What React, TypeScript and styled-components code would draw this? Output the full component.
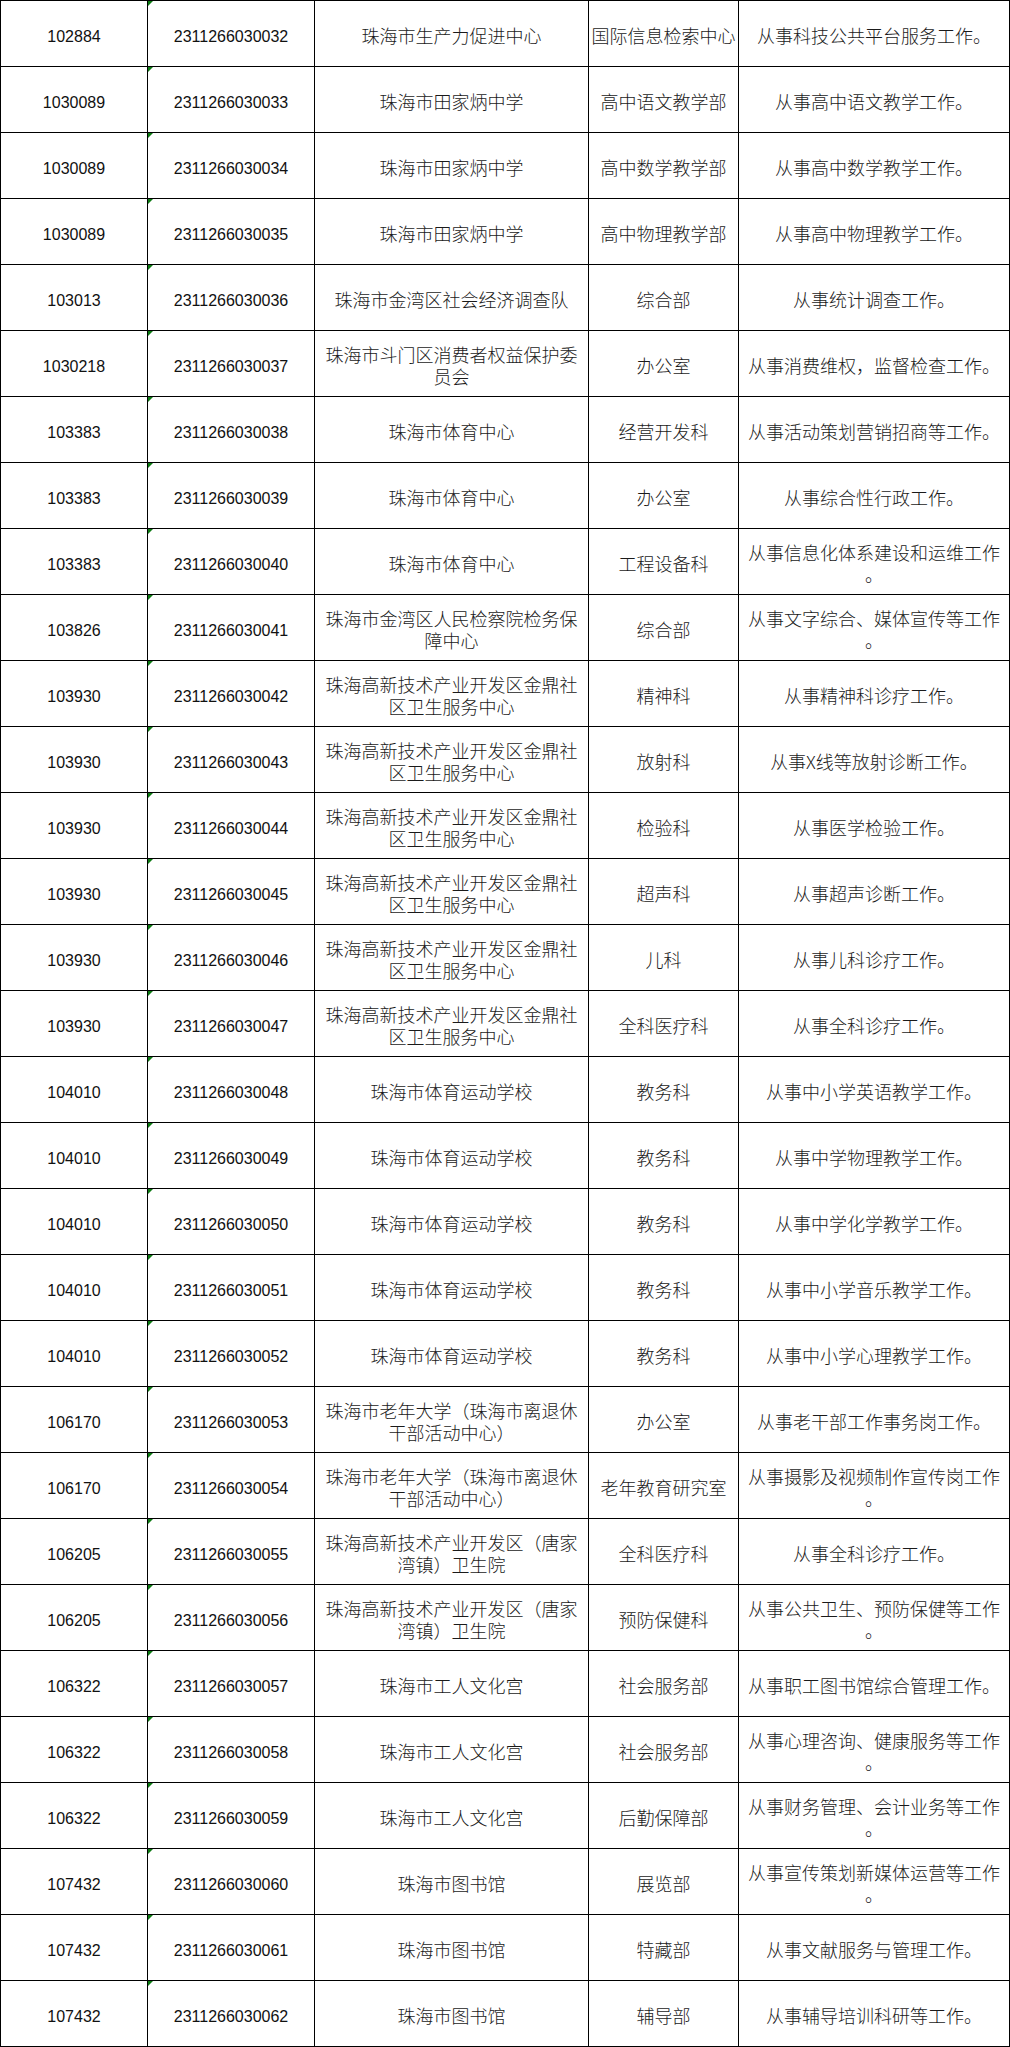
import React from 'react';
import styled, { createGlobalStyle } from 'styled-components';

const GlobalStyle = createGlobalStyle`
  html, body {
    margin: 0;
    padding: 0;
    background: #fff;
  }
`;

type Row = [string, string, string, string, string];

const gaoxin = '珠海高新技术产业开发区金鼎社区卫生服务中心';
const laonian = '珠海市老年大学（珠海市离退休干部活动中心）';
const tangjia = '珠海高新技术产业开发区（唐家湾镇）卫生院';
const tiyu = '珠海市体育运动学校';

const rows: Row[] = [
  ['102884', '2311266030032', '珠海市生产力促进中心', '国际信息检索中心', '从事科技公共平台服务工作。'],
  ['1030089', '2311266030033', '珠海市田家炳中学', '高中语文教学部', '从事高中语文教学工作。'],
  ['1030089', '2311266030034', '珠海市田家炳中学', '高中数学教学部', '从事高中数学教学工作。'],
  ['1030089', '2311266030035', '珠海市田家炳中学', '高中物理教学部', '从事高中物理教学工作。'],
  ['103013', '2311266030036', '珠海市金湾区社会经济调查队', '综合部', '从事统计调查工作。'],
  ['1030218', '2311266030037', '珠海市斗门区消费者权益保护委员会', '办公室', '从事消费维权，监督检查工作。'],
  ['103383', '2311266030038', '珠海市体育中心', '经营开发科', '从事活动策划营销招商等工作。'],
  ['103383', '2311266030039', '珠海市体育中心', '办公室', '从事综合性行政工作。'],
  ['103383', '2311266030040', '珠海市体育中心', '工程设备科', '从事信息化体系建设和运维工作。'],
  ['103826', '2311266030041', '珠海市金湾区人民检察院检务保障中心', '综合部', '从事文字综合、媒体宣传等工作。'],
  ['103930', '2311266030042', gaoxin, '精神科', '从事精神科诊疗工作。'],
  ['103930', '2311266030043', gaoxin, '放射科', '从事X线等放射诊断工作。'],
  ['103930', '2311266030044', gaoxin, '检验科', '从事医学检验工作。'],
  ['103930', '2311266030045', gaoxin, '超声科', '从事超声诊断工作。'],
  ['103930', '2311266030046', gaoxin, '儿科', '从事儿科诊疗工作。'],
  ['103930', '2311266030047', gaoxin, '全科医疗科', '从事全科诊疗工作。'],
  ['104010', '2311266030048', tiyu, '教务科', '从事中小学英语教学工作。'],
  ['104010', '2311266030049', tiyu, '教务科', '从事中学物理教学工作。'],
  ['104010', '2311266030050', tiyu, '教务科', '从事中学化学教学工作。'],
  ['104010', '2311266030051', tiyu, '教务科', '从事中小学音乐教学工作。'],
  ['104010', '2311266030052', tiyu, '教务科', '从事中小学心理教学工作。'],
  ['106170', '2311266030053', laonian, '办公室', '从事老干部工作事务岗工作。'],
  ['106170', '2311266030054', laonian, '老年教育研究室', '从事摄影及视频制作宣传岗工作。'],
  ['106205', '2311266030055', tangjia, '全科医疗科', '从事全科诊疗工作。'],
  ['106205', '2311266030056', tangjia, '预防保健科', '从事公共卫生、预防保健等工作。'],
  ['106322', '2311266030057', '珠海市工人文化宫', '社会服务部', '从事职工图书馆综合管理工作。'],
  ['106322', '2311266030058', '珠海市工人文化宫', '社会服务部', '从事心理咨询、健康服务等工作。'],
  ['106322', '2311266030059', '珠海市工人文化宫', '后勤保障部', '从事财务管理、会计业务等工作。'],
  ['107432', '2311266030060', '珠海市图书馆', '展览部', '从事宣传策划新媒体运营等工作。'],
  ['107432', '2311266030061', '珠海市图书馆', '特藏部', '从事文献服务与管理工作。'],
  ['107432', '2311266030062', '珠海市图书馆', '辅导部', '从事辅导培训科研等工作。'],
];

const Sheet = styled.div`
  display: grid;
  grid-template-columns: 147px 167px 274px 150px 271px;
  grid-auto-rows: 66px;
  width: 1010px;
  box-sizing: border-box;
  border-top: 1px solid #000;
  border-left: 1px solid #000;
  color: #111;
`;

const Cell = styled.div`
  position: relative;
  display: flex;
  align-items: center;
  justify-content: center;
  box-sizing: border-box;
  border-right: 1px solid #000;
  border-bottom: 1px solid #000;
  text-align: center;
`;

// numbers stored as text get Excel's little green corner flag
const NumCell = styled(Cell)<{ $flag?: boolean }>`
  padding-top: 6px;
  font-family: 'Liberation Sans', Arial, sans-serif;
  font-size: 16px;
  line-height: 22px;

  &::before {
    content: '';
    display: ${p => (p.$flag ? 'block' : 'none')};
    position: absolute;
    top: 0;
    left: 0;
    width: 0;
    height: 0;
    border-top: 5px solid #0c7a12;
    border-right: 5px solid transparent;
  }
`;

const TextCell = styled(Cell)<{ $pad: number }>`
  padding: 2px ${p => p.$pad}px 0;
  font-family: 'Noto Sans CJK SC', 'Liberation Sans', sans-serif;
  font-size: 18px;
  font-weight: 300;
  line-height: 22px;
  color: #1a1a1a;
  line-break: anywhere;
  word-break: break-all;
`;

const App: React.FC = () => {
  return (
    <>
      <GlobalStyle />
      <Sheet>
        {rows.map(([unit, code, org, dept, duty]) => (
          <React.Fragment key={code}>
            <NumCell>{unit}</NumCell>
            <NumCell $flag>{code}</NumCell>
            <TextCell $pad={3}>{org}</TextCell>
            <TextCell $pad={2}>{dept}</TextCell>
            <TextCell $pad={3}>{duty}</TextCell>
          </React.Fragment>
        ))}
      </Sheet>
    </>
  );
};

export default App;
